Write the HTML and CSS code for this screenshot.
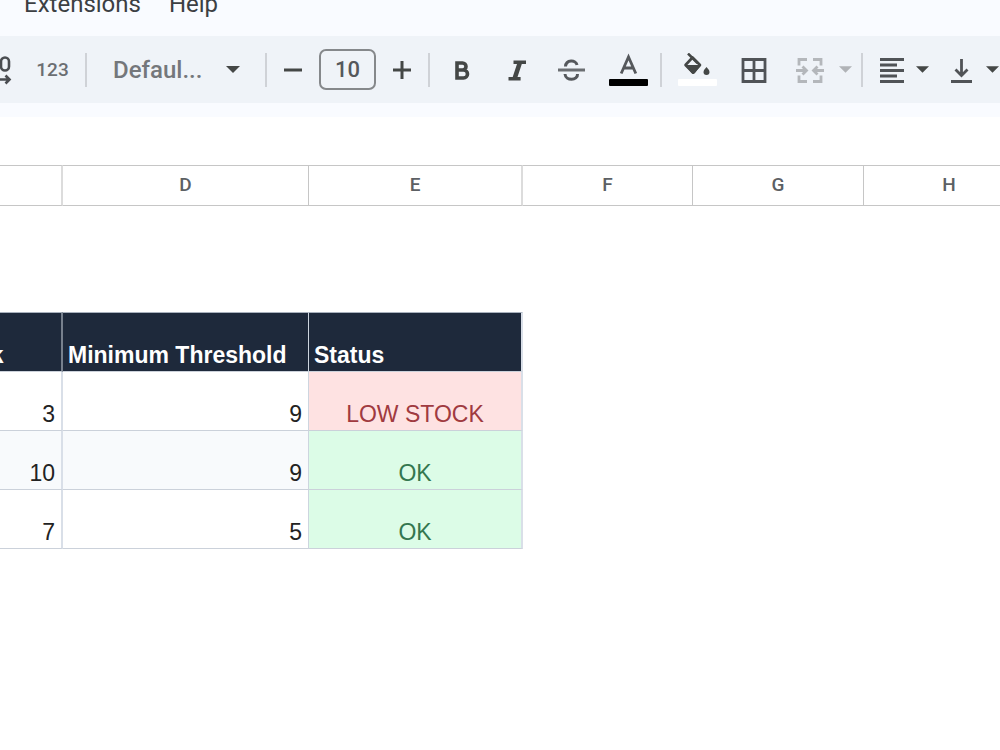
FILE: index.html
```html
<!DOCTYPE html>
<html lang="en">
<head>
<meta charset="utf-8">
<title>Inventory sheet</title>
<link rel="stylesheet" href="styles.css">
</head>
<body>
<header class="app-header">
  <nav class="menu">
    <button class="menu-item" type="button">Extensions</button>
    <button class="menu-item" type="button">Help</button>
  </nav>
  <div class="toolbar" role="toolbar" aria-label="Formatting">
    <button class="tool tool-decimal" type="button" aria-label="Increase decimal places">
      <svg width="12" height="30" viewBox="0 0 12 30" fill="none" stroke="#4a4d51" stroke-width="2.6"><rect x="1" y="2.500" width="8" height="13" rx="4"/><path d="M0 24.500h9M5.500 20.500l4 4-4 4"/></svg>
    </button>
    <button class="tool tool-number" type="button" aria-label="More formats">123</button>
    <span class="divider"></span>
    <div class="font-picker">
      <select class="font-select" aria-label="Font"><option>Defaul...</option></select>
      <svg class="caret" width="14" height="7" viewBox="0 0 14 7"><path d="M0 0h14L7 7z"/></svg>
    </div>
    <span class="divider"></span>
    <button class="tool tool-step" type="button" aria-label="Decrease font size">
      <svg width="20" height="20" viewBox="0 0 20 20"><path d="M1 8.500h18v3H1z"/></svg>
    </button>
    <input class="size-input" type="text" value="10" aria-label="Font size">
    <button class="tool tool-step" type="button" aria-label="Increase font size">
      <svg width="20" height="20" viewBox="0 0 20 20"><path d="M1 8.500h7.500V1h3v7.500H19v3h-7.500V19h-3v-7.500H1z"/></svg>
    </button>
    <span class="divider"></span>
    <button class="tool tool-wide" type="button" aria-label="Bold">
      <svg width="16" height="20" viewBox="0 0 16 20" fill="none" stroke="#444746" stroke-width="3.600"><path d="M3 3h5.500a3.500 3.500 0 0 1 0 7H3zM3 10h6.500a4 4 0 0 1 0 8H3z"/></svg>
    </button>
    <button class="tool tool-narrow" type="button" aria-label="Italic">
      <svg width="20" height="22" viewBox="0 0 20 22"><path d="M6.500 1.500H19v3.600h-4.200L10.500 17.900h3.100v3.600H1.500v-3.600h4.200L10 5.100H6.500z"/></svg>
    </button>
    <button class="tool tool-wide" type="button" aria-label="Strikethrough">
      <svg width="28" height="24" viewBox="0 0 28 24" fill="none" stroke="#55585c"><path stroke-width="3" stroke="#6b6e72" d="M1 12h27"/><path stroke-width="3" d="M8.500 8.500C9 1.500 19 1.500 20 7M8 16c.5 7 13 7 12.500 0"/></svg>
    </button>
    <button class="tool tool-color" type="button" aria-label="Text color">
      <svg width="40" height="34" viewBox="0 0 40 34"><path fill="none" stroke="#55585c" stroke-width="2.800" d="M13.200 20.500L20.500 4 27.800 20.500M15.500 15h10"/><rect x="1" y="26" width="39" height="7" rx="1" fill="#000"/></svg>
    </button>
    <span class="divider"></span>
    <button class="tool tool-fill" type="button" aria-label="Fill color">
      <svg width="40" height="34" viewBox="0 0 40 34"><path fill="none" stroke="#444746" stroke-width="2.500" d="M11 .5l9.500 9.500"/><path fill="none" stroke="#444746" stroke-width="2.600" stroke-linejoin="round" d="M15.500 4.500l7.500 7.500-7 7.500-7.500-7.500z"/><path d="M8 12h16l-6 8q-1.800 1.800-3.500 0z"/><path d="M29.500 14q3 3 3 5a3 3 0 0 1-6 0q0-2 3-5z"/><rect x="1" y="26" width="39" height="7" rx="1" fill="#fff"/></svg>
    </button>
    <button class="tool tool-narrow" type="button" aria-label="Borders">
      <svg width="26" height="26" viewBox="0 0 26 26" fill="none" stroke="#505357" stroke-width="2.800"><path d="M2 2.500h22v22H2zM13 2.500v22M2 13.500h22"/></svg>
    </button>
    <button class="tool tool-merge" type="button" aria-label="Merge cells" disabled>
      <svg width="28" height="26" viewBox="0 0 28 26" fill="none" stroke="#b4b7bb" stroke-width="2.800"><path d="M11 2.500H3v6M17 2.500h8v6M11 24.500H3v-6M17 24.500h8v-6M0 13.500h10M6.500 9.500l4 4-4 4M28 13.500H18M21.500 9.500l-4 4 4 4"/></svg>
      <svg class="caret" width="13" height="7" viewBox="0 0 14 7"><path d="M0 0h14L7 7z"/></svg>
    </button>
    <span class="divider"></span>
    <button class="tool tool-align" type="button" aria-label="Horizontal align">
      <svg width="24" height="26" viewBox="0 0 24 26" fill="none" stroke="#505357" stroke-width="2.800"><path d="M0 2.500h24M0 8h17M0 13.500h24M0 19h17M0 24.500h24"/></svg>
      <svg class="caret" width="13" height="7" viewBox="0 0 14 7"><path d="M0 0h14L7 7z"/></svg>
    </button>
    <button class="tool tool-valign" type="button" aria-label="Vertical align">
      <svg width="21" height="26" viewBox="0 0 21 26" fill="none" stroke="#505357" stroke-width="2.800"><path d="M10.500 2v16M4.500 12.500l6 6 6-6M0 24.500h21"/></svg>
      <svg class="caret" width="13" height="7" viewBox="0 0 14 7"><path d="M0 0h14L7 7z"/></svg>
    </button>
  </div>
</header>
<main class="sheet">
  <table class="grid">
    <colgroup><col class="col-c"><col class="col-d"><col class="col-e"><col class="col-f"><col class="col-g"><col class="col-g"></colgroup>
    <thead>
      <tr class="letters"><th class="thick"></th><th>D</th><th class="thick">E</th><th>F</th><th>G</th><th>H</th></tr>
    </thead>
    <tbody>
      <tr class="blank"><td colspan="6"></td></tr>
      <tr class="titles"><th class="thick">Stock</th><th>Minimum Threshold</th><th class="thick">Status</th></tr>
      <tr class="data"><td class="thick">3</td><td>9</td><td class="thick low">LOW STOCK</td></tr>
      <tr class="data alt"><td class="thick">10</td><td>9</td><td class="thick ok">OK</td></tr>
      <tr class="data"><td class="thick">7</td><td>5</td><td class="thick ok">OK</td></tr>
    </tbody>
  </table>
</main>
</body>
</html>
```
FILE: styles.css
```css
* { box-sizing: border-box; }

body {
  margin: 0;
  background: #fff;
  color: #222;
  font-family: Roboto, "Liberation Sans", sans-serif;
  overflow: hidden;
}

button, select, input {
  margin: 0;
  padding: 0;
  border: 0;
  background: none;
  color: inherit;
  font: inherit;
}

svg { display: block; flex: none; fill: #444746; }
svg[fill="none"] { fill: none; }

.app-header {
  background: #f9fbff;
  padding-bottom: 14px;
  overflow: hidden;
}

.menu {
  display: flex;
  gap: 28px;
  height: 36px;
  padding-left: 24px;
}

.menu-item {
  height: 28px;
  margin-top: -10px;
  font-size: 24px;
  line-height: 28px;
  color: #3c3f43;
}

.toolbar {
  display: flex;
  align-items: center;
  height: 67px;
  background: #eff3f8;
  color: #55585c;
}

.tool {
  display: flex;
  flex: none;
  align-items: center;
  justify-content: center;
  height: 48px;
}

.tool-decimal { width: 20px; justify-content: flex-start; }
.tool-number { width: 65px; font-size: 19px; font-weight: 500; color: #6b6e72; }
.tool-step { width: 52px; }
.tool-wide { width: 64px; }
.tool-narrow { width: 45px; }
.tool-color { width: 49px; margin-right: 8px; }
.tool-fill { width: 69px; }
.tool-merge { width: 85px; padding-left: 20px; gap: 15px; justify-content: flex-start; }
.tool-align { width: 73px; padding-left: 17px; gap: 12px; justify-content: flex-start; }
.tool-valign { width: 80px; padding-left: 15px; gap: 14px; justify-content: flex-start; }
.tool-merge .caret { fill: #b0b3b7; }

.divider {
  flex: none;
  width: 2px;
  height: 34px;
  background: #cfd2d7;
}

.font-picker {
  display: flex;
  flex: none;
  align-items: center;
  width: 178px;
  padding-left: 26px;
}

.font-select {
  appearance: none;
  width: 113px;
  height: 40px;
  font-size: 24px;
  font-weight: 500;
  color: #74777b;
}

.size-input {
  flex: none;
  width: 57px;
  height: 41px;
  border: 2px solid #85888b;
  border-radius: 7px;
  text-align: center;
  font-size: 22px;
  font-weight: 500;
}

.sheet {
  padding-top: 48px;
  overflow: hidden;
}

.grid {
  width: 1098px;
  margin-left: -64px;
  table-layout: fixed;
  border-collapse: separate;
  border-spacing: 0;
}

.col-c { width: 127px; }
.col-d { width: 246px; }
.col-e { width: 214px; }
.col-f { width: 170px; }
.col-g { width: 171px; }

.grid th, .grid td { padding: 0 6px; }

.letters th {
  height: 41px;
  padding-bottom: 2px;
  border: solid #c6c6c6;
  border-width: 1px 1px 1px 0;
  font-size: 19px;
  font-weight: 500;
  line-height: 22px;
  color: #5c6064;
}

.letters .thick { border-right: 2px solid #dcdcdc; }

.blank td { height: 106px; }

.grid .titles th, .grid .data td {
  height: 59px;
  padding-bottom: 3px;
  border-right: 1px solid #cdd5df;
  border-bottom: 1px solid #cbd1da;
  vertical-align: bottom;
  font-family: "Liberation Sans", Arial, sans-serif;
  font-size: 23px;
  line-height: 26px;
}

.grid .titles th {
  height: 60px;
  padding-left: 5px;
  border-top: 1px solid #a9b1bd;
  background: #1e293b;
  color: #fff;
  text-align: left;
}

.grid .titles .thick, .grid .data .thick { border-right: 2px solid #d9dfe8; }
.grid .titles .thick:first-child { border-right-color: #77808d; }

.data td { text-align: right; }
.alt td { background: #f8fafc; }

.data .low, .data .ok { text-align: center; }
.data .low { background: #fee2e2; color: #a03a40; }
.data .ok { background: #dcfce7; color: #34774f; }
```
